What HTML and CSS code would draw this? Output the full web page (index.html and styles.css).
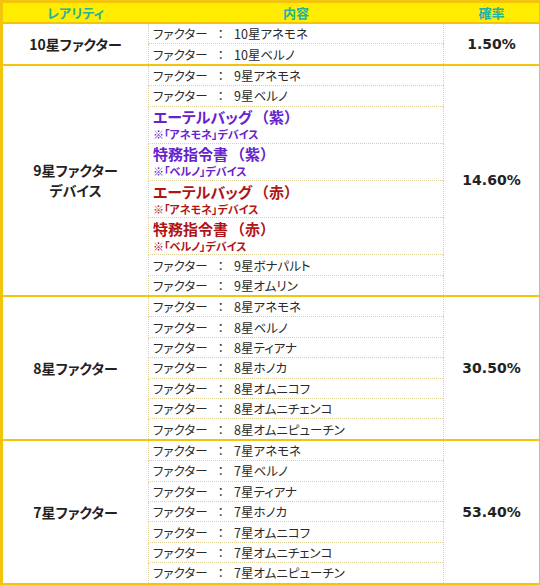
FILE: index.html
```html
<!DOCTYPE html>
<html lang="ja">
<head>
<meta charset="utf-8">
<link rel="stylesheet" href="styles.css">
</head>
<body>
<table class="gacha">
  <thead>
    <tr>
      <th class="c-rarity">レアリティ</th>
      <th class="c-content">内容</th>
      <th class="c-rate">確率</th>
    </tr>
  </thead>
  <tbody>
    <tr class="grp">
      <td class="rarity" rowspan="2">10星ファクター</td>
      <td class="item">ファクター<span class="sep">：</span>10星アネモネ</td>
      <td class="rate" rowspan="2">1.50%</td>
    </tr>
    <tr><td class="item last">ファクター<span class="sep">：</span>10星ベルノ</td></tr>

    <tr class="grp">
      <td class="rarity" rowspan="8">9星ファクター<br>デバイス</td>
      <td class="item">ファクター<span class="sep">：</span>9星アネモネ</td>
      <td class="rate" rowspan="8">14.60%</td>
    </tr>
    <tr><td class="item">ファクター<span class="sep">：</span>9星ベルノ</td></tr>
    <tr><td class="item dbl purple"><span class="big">エーテルバッグ<span class="par">（紫）</span></span><span class="note">※「アネモネ」デバイス</span></td></tr>
    <tr><td class="item dbl purple"><span class="big">特務指令書<span class="par">（紫）</span></span><span class="note">※「ベルノ」デバイス</span></td></tr>
    <tr><td class="item dbl red"><span class="big">エーテルバッグ<span class="par">（赤）</span></span><span class="note">※「アネモネ」デバイス</span></td></tr>
    <tr><td class="item dbl red"><span class="big">特務指令書<span class="par">（赤）</span></span><span class="note">※「ベルノ」デバイス</span></td></tr>
    <tr><td class="item">ファクター<span class="sep">：</span>9星ボナパルト</td></tr>
    <tr><td class="item last">ファクター<span class="sep">：</span>9星オムリン</td></tr>

    <tr class="grp">
      <td class="rarity" rowspan="7">8星ファクター</td>
      <td class="item">ファクター<span class="sep">：</span>8星アネモネ</td>
      <td class="rate" rowspan="7">30.50%</td>
    </tr>
    <tr><td class="item">ファクター<span class="sep">：</span>8星ベルノ</td></tr>
    <tr><td class="item">ファクター<span class="sep">：</span>8星ティアナ</td></tr>
    <tr><td class="item">ファクター<span class="sep">：</span>8星ホノカ</td></tr>
    <tr><td class="item">ファクター<span class="sep">：</span>8星オムニコフ</td></tr>
    <tr><td class="item">ファクター<span class="sep">：</span>8星オムニチェンコ</td></tr>
    <tr><td class="item last">ファクター<span class="sep">：</span>8星オムニピューチン</td></tr>

    <tr class="grp">
      <td class="rarity" rowspan="7">7星ファクター</td>
      <td class="item">ファクター<span class="sep">：</span>7星アネモネ</td>
      <td class="rate" rowspan="7">53.40%</td>
    </tr>
    <tr><td class="item">ファクター<span class="sep">：</span>7星ベルノ</td></tr>
    <tr><td class="item">ファクター<span class="sep">：</span>7星ティアナ</td></tr>
    <tr><td class="item">ファクター<span class="sep">：</span>7星ホノカ</td></tr>
    <tr><td class="item">ファクター<span class="sep">：</span>7星オムニコフ</td></tr>
    <tr><td class="item">ファクター<span class="sep">：</span>7星オムニチェンコ</td></tr>
    <tr><td class="item last">ファクター<span class="sep">：</span>7星オムニピューチン</td></tr>
  </tbody>
</table>
</body>
</html>
```

FILE: styles.css
```css
html, body {
  margin: 0;
  padding: 0;
  background: #ffffff;
}

.gacha {
  width: 540px;
  border-collapse: collapse;
  table-layout: fixed;
  font-family: "Noto Sans CJK JP", "Noto Sans", sans-serif;
  font-feature-settings: "palt";
  color: #222222;
  border: 3px solid #f2c40c;
}

.c-rarity { width: 145px; }
.c-content { width: 294px; }
.c-rate { width: 95px; }

thead th {
  background: #ffec00;
  color: #26b29c;
  font-weight: bold;
  font-size: 13px;
  height: 19px;
  padding: 0;
  line-height: 19px;
  border-bottom: 2px solid #f2c40c;
  border-left: 1px dotted #e8d890;
}
thead th:first-child { border-left: none; }

td {
  padding: 0;
}

tr.grp td {
  border-top: 2px solid #f2c40c;
}

.rarity {
  text-align: center;
  vertical-align: middle;
  font-weight: bold;
  font-size: 14px;
  line-height: 20px;
  color: #222;
}

.rate {
  text-align: center;
  vertical-align: middle;
  font-family: "DejaVu Sans", sans-serif;
  font-weight: bold;
  font-size: 14px;
  color: #222;
  border-left: 1px dotted #dccf98;
}

.item {
  font-size: 12.5px;
  height: 19.4px;
  line-height: 19px;
  padding-left: 4px;
  border-left: 1px dotted #dccf98;
  border-bottom: 1px dotted #dccf98;
  white-space: nowrap;
  color: #2a2a2a;
}
.item.last { border-bottom: none; }

.item .sep {
  font-feature-settings: normal;
  margin: 0 7px;
}

.item.dbl {
  height: 36.2px;
  line-height: 1;
}
.item.dbl .big {
  display: block;
  font-size: 15px;
  font-weight: bold;
  line-height: 19px;
}
.item.dbl .par {
  font-feature-settings: normal;
  margin-left: 2px;
}
.item.dbl .note {
  display: block;
  font-size: 11px;
  font-weight: bold;
  line-height: 16px;
}

.purple { color: #6622cc; }
.red { color: #b01414; }
```
